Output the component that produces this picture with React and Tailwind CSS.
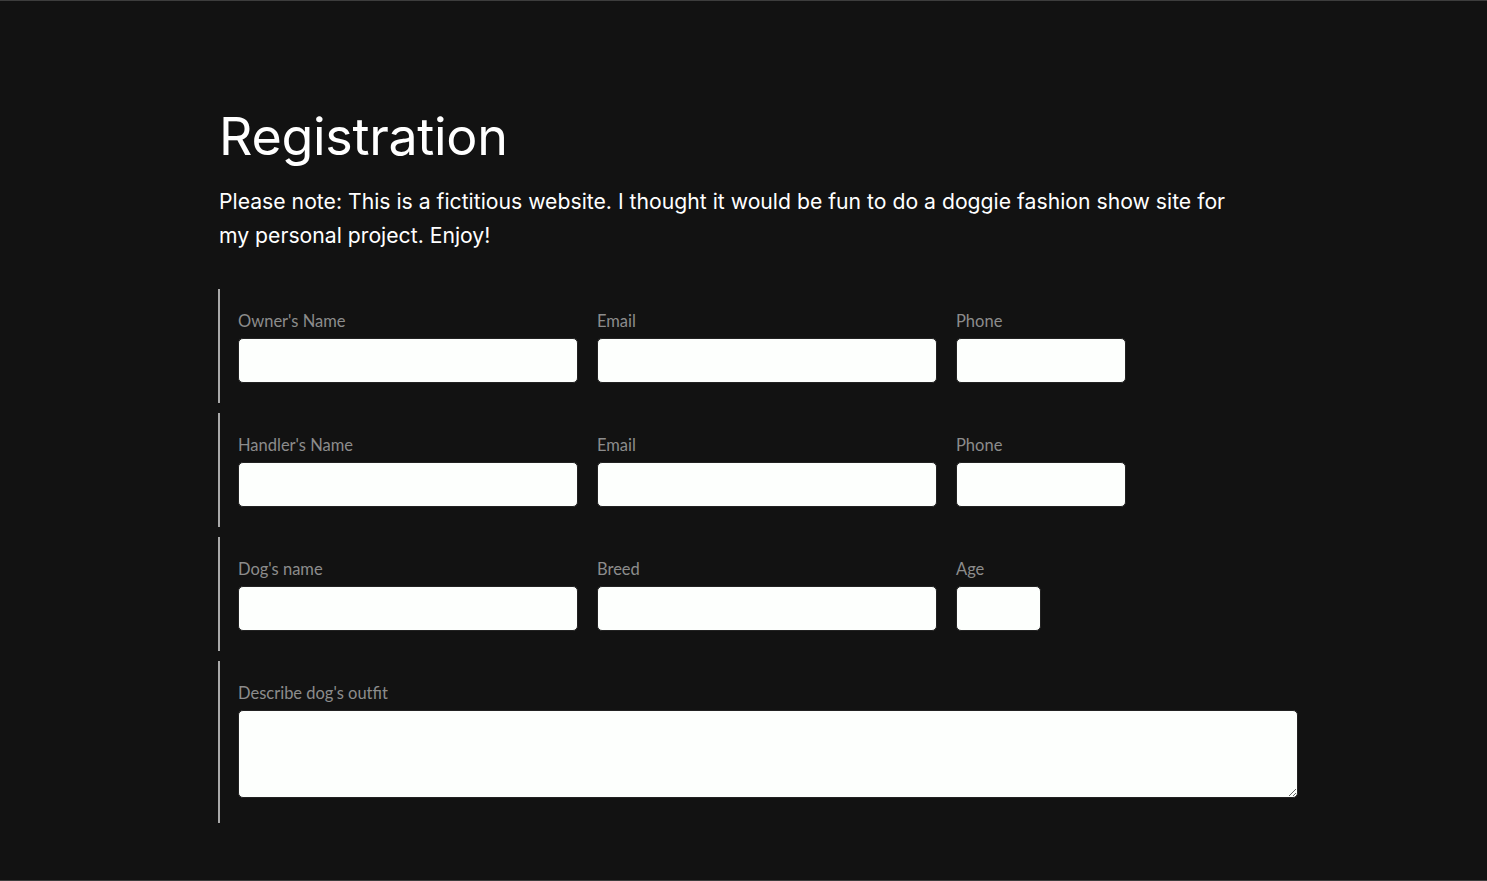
import React from 'react';

const Field = ({ label, width, type = 'text' }) => (
  <label className="flex flex-col">
    <span className="text-[16.5px] leading-[24px] text-[#8c8c8c] mb-[5px]">{label}</span>
    <input type={type} className={`${width} h-[45px] bg-[#fdfffd] border border-[#222] rounded-[5px] outline-none`} />
  </label>
);

const Group = ({ children }) => (
  <fieldset className="border-l-2 border-[#a9a9a9] pl-[18px] pt-[20px] pb-[20px] flex gap-[19px]">
    {children}
  </fieldset>
);

const App = () => {
  return (
    <div className="min-h-[881px] bg-[#121212] border-t border-b border-[#3d3d3d] font-['Lato',sans-serif]">
      <div className="ml-[218px] w-[1081px] pt-[104px]">
        <h1 className="pl-[1px] text-[52px] leading-[64px] text-white font-['Inter',sans-serif] font-normal tracking-[-0.3px]">
          Registration
        </h1>
        <p className="pl-[1px] mt-[15px] max-w-[1040px] text-[21.2px] leading-[34px] text-white font-['Inter',sans-serif]">
          Please note: This is a fictitious website. I thought it would be fun to do a doggie fashion show site for my personal project. Enjoy!
        </p>

        <form className="mt-[37px] flex flex-col gap-[10px]">
          <Group>
            <Field label="Owner's Name" width="w-[340px]" />
            <Field label="Email" width="w-[340px]" type="email" />
            <Field label="Phone" width="w-[170px]" type="tel" />
          </Group>
          <Group>
            <Field label="Handler's Name" width="w-[340px]" />
            <Field label="Email" width="w-[340px]" type="email" />
            <Field label="Phone" width="w-[170px]" type="tel" />
          </Group>
          <Group>
            <Field label="Dog's name" width="w-[340px]" />
            <Field label="Breed" width="w-[340px]" />
            <Field label="Age" width="w-[85px]" />
          </Group>
          <fieldset className="border-l-2 border-[#a9a9a9] pl-[18px] pt-[20px] pb-[20px]">
            <label className="flex flex-col">
              <span className="text-[16.5px] leading-[24px] text-[#8c8c8c] mb-[5px]">Describe dog's outfit</span>
              <textarea className="w-[1060px] h-[88px] bg-[#fdfffd] border border-[#222] rounded-[5px] outline-none mb-[5px]" />
            </label>
          </fieldset>
        </form>
      </div>
    </div>
  );
};

export default App;
